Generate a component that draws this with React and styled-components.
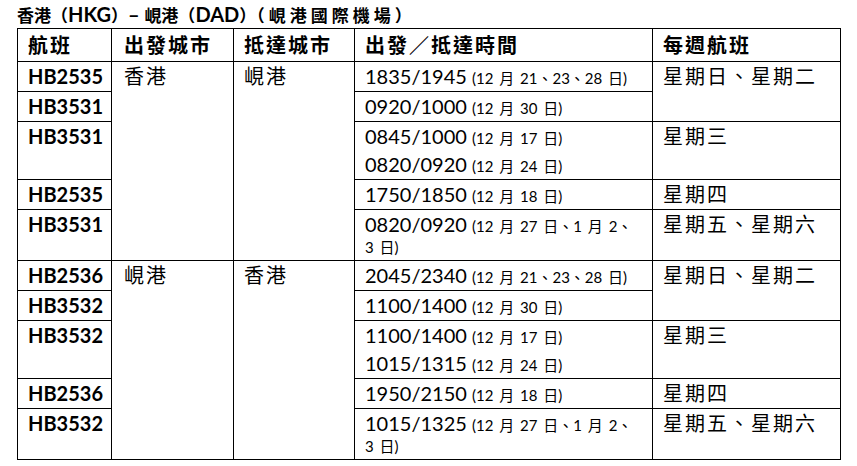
import { createGlobalStyle, styled } from "styled-components";

const GlobalStyle = createGlobalStyle`
  html, body {
    margin: 0;
    padding: 0;
    background: #fff;
    color: #000;
    font-family: "Lato", "Noto Sans CJK TC", sans-serif;
  }
`;

const Page = styled.div`
  width: 823px;
  padding-left: 17px;
`;

const Title = styled.h1`
  margin: 0;
  height: 28px;
  font-size: 17px;
  font-weight: 700;
  line-height: 28px;
  white-space: nowrap;
`;

const Latin = styled.span`
  font-size: 20px;
`;

const Spaced = styled.span`
  letter-spacing: 4px;
`;

const Table = styled.table`
  width: 823px;
  table-layout: fixed;
  border-collapse: collapse;
  border: 1px solid #000;
  font-size: 20px;
`;

const HeadCell = styled.th`
  border: 1px solid #000;
  height: 32px;
  padding: 0 ${p => p.$pad || 10}px;
  text-align: left;
  font-weight: 700;
  line-height: 20px;
  letter-spacing: 2px;
  white-space: nowrap;
`;

const Cell = styled.td`
  border: 1px solid #000;
  padding: 0 ${p => p.$pad || 10}px;
  vertical-align: top;
  line-height: 20px;
`;

const FlightCell = styled(Cell)`
  font-weight: 700;
  padding-top: 4px;
`;

const CityCell = styled(Cell)`
  letter-spacing: 2px;
  padding-top: 4px;
`;

const WeekCell = styled(Cell)`
  letter-spacing: 2px;
  white-space: nowrap;
  padding-top: 4px;
`;

const TimeCell = styled(Cell)`
  white-space: nowrap;
  padding-bottom: 1px;
`;

const TimeLine = styled.div`
  height: 28px;
  padding-top: 4px;
  box-sizing: border-box;
`;

const Note = styled.span`
  font-size: 15px;
  line-height: 1;
  word-spacing: 2px;
`;

const ContLine = styled.div`
  height: 21px;
  font-size: 15px;
  line-height: 18px;
  word-spacing: 2px;
`;

const sections = [
  {
    from: "香港",
    to: "峴港",
    rows: [
      { flight: "HB2535", times: [{ t: "1835/1945", n: "(12 月 21、23、28 日)" }], week: "星期日、星期二", span: 2 },
      { flight: "HB3531", times: [{ t: "0920/1000", n: "(12 月 30 日)" }] },
      {
        flight: "HB3531",
        times: [
          { t: "0845/1000", n: "(12 月 17 日)" },
          { t: "0820/0920", n: "(12 月 24 日)" },
        ],
        week: "星期三",
      },
      { flight: "HB2535", times: [{ t: "1750/1850", n: "(12 月 18 日)" }], week: "星期四" },
      { flight: "HB3531", times: [{ t: "0820/0920", n: "(12 月 27 日、1 月 2、", cont: "3 日)" }], week: "星期五、星期六" },
    ],
  },
  {
    from: "峴港",
    to: "香港",
    rows: [
      { flight: "HB2536", times: [{ t: "2045/2340", n: "(12 月 21、23、28 日)" }], week: "星期日、星期二", span: 2 },
      { flight: "HB3532", times: [{ t: "1100/1400", n: "(12 月 30 日)" }] },
      {
        flight: "HB3532",
        times: [
          { t: "1100/1400", n: "(12 月 17 日)" },
          { t: "1015/1315", n: "(12 月 24 日)" },
        ],
        week: "星期三",
      },
      { flight: "HB2536", times: [{ t: "1950/2150", n: "(12 月 18 日)" }], week: "星期四" },
      { flight: "HB3532", times: [{ t: "1015/1325", n: "(12 月 27 日、1 月 2、", cont: "3 日)" }], week: "星期五、星期六" },
    ],
  },
];

function App() {
  return (
    <Page>
      <GlobalStyle />
      <Title>
        香港（<Latin>HKG</Latin>）<Latin>– </Latin>峴港（<Latin>DAD</Latin>）<Spaced>（峴港國際機場）</Spaced>
      </Title>
      <Table>
        <colgroup>
          <col style={{ width: 94 }} />
          <col style={{ width: 122 }} />
          <col style={{ width: 121 }} />
          <col style={{ width: 298 }} />
          <col style={{ width: 188 }} />
        </colgroup>
        <thead>
          <tr>
            <HeadCell>航班</HeadCell>
            <HeadCell $pad={12}>出發城市</HeadCell>
            <HeadCell>抵達城市</HeadCell>
            <HeadCell>出發／抵達時間</HeadCell>
            <HeadCell>每週航班</HeadCell>
          </tr>
        </thead>
        <tbody>
          {sections.map(sec =>
            sec.rows.map((row, i) => (
              <tr key={sec.from + i}>
                <FlightCell>{row.flight}</FlightCell>
                {i === 0 && (
                  <>
                    <CityCell $pad={12} rowSpan={sec.rows.length}>{sec.from}</CityCell>
                    <CityCell rowSpan={sec.rows.length}>{sec.to}</CityCell>
                  </>
                )}
                <TimeCell>
                  {row.times.map(tm => (
                    <div key={tm.t + tm.n}>
                      <TimeLine>
                        {tm.t} <Note>{tm.n}</Note>
                      </TimeLine>
                      {tm.cont && <ContLine>{tm.cont}</ContLine>}
                    </div>
                  ))}
                </TimeCell>
                {row.week && <WeekCell rowSpan={row.span || 1}>{row.week}</WeekCell>}
              </tr>
            ))
          )}
        </tbody>
      </Table>
    </Page>
  );
}

export default App;
